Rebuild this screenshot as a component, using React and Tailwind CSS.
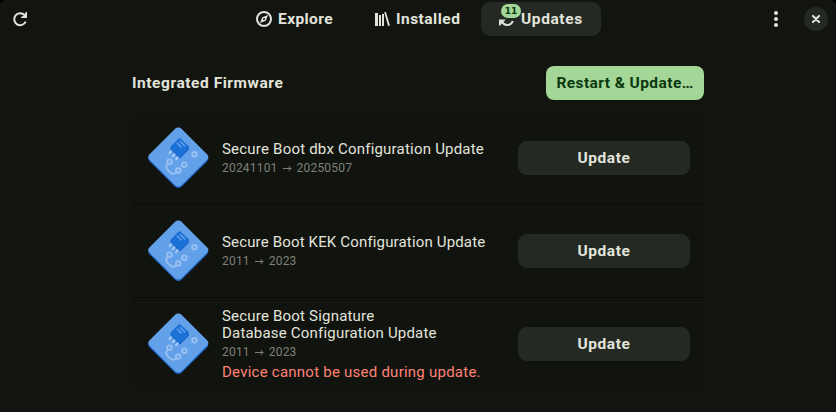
const rows = [
  { lines: ["Secure Boot dbx Configuration Update"], from: "20241101", to: "20250507", spacing: "tracking-[0.21px]" },
  { lines: ["Secure Boot KEK Configuration Update"], from: "2011", to: "2023", spacing: "tracking-[0.16px]" },
  {
    lines: ["Secure Boot Signature", "Database Configuration Update"],
    from: "2011",
    to: "2023",
    spacing: "tracking-[0.2px]",
    warning: "Device cannot be used during update.",
  },
];

function RefreshIcon() {
  return (
    <svg className="size-4" viewBox="0 0 16 16" fill="none">
      <path d="M13.7 10.6A6 6 0 1 1 12.6 4.1" stroke="currentColor" strokeWidth="2" />
      <path d="M15 1v6H9V6l2.2-1.1L14 1z" fill="currentColor" />
    </svg>
  );
}

function CompassIcon() {
  return (
    <svg className="size-4" viewBox="0 0 16 16" fill="none">
      <circle cx="8" cy="8" r="7" stroke="currentColor" strokeWidth="2" />
      <path fillRule="evenodd" d="M12 4L9.8 9.8 4 12l2.2-5.8zM8 7a1 1 0 1 0 0 2 1 1 0 0 0 0-2z" fill="currentColor" />
    </svg>
  );
}

function LibraryIcon() {
  return (
    <svg className="size-4" viewBox="0 0 16 16" fill="currentColor">
      <path d="M1 2h3v13H1zM5 4h2v11H5zM8 3h2v12H8z" />
      <path d="M10.2 1.3l1.7-.4 4 13.5-1.8.5z" />
    </svg>
  );
}

function SyncIcon() {
  return (
    <svg className="size-4" viewBox="0 0 16 16" fill="none">
      <path d="M3.2 11A5.8 5.8 0 0 0 13.8 10" stroke="currentColor" strokeWidth="2" />
      <path d="M0 14.5V8.5h6v1L4 11 1.2 14.5z" fill="currentColor" />
    </svg>
  );
}

function FirmwareIcon() {
  return (
    <svg className="mb-[3px] size-16 shrink-0" viewBox="-0.3 0 64 64" fill="none">
      <path d="M28.8 5.5a4.6 4.6 0 0 1 6.4 0L60.7 31a3.8 3.8 0 0 1 0 5.4L35.2 61.8a4.6 4.6 0 0 1-6.4 0L3.3 36.4a3.8 3.8 0 0 1 0-5.4z" fill="#1c62c4" />
      <path d="M28.8 3.8a4.6 4.6 0 0 1 6.4 0l25.5 25.5a3.8 3.8 0 0 1 0 5.4L35.2 60.2a4.6 4.6 0 0 1-6.4 0L3.3 34.7a3.8 3.8 0 0 1 0-5.4z" fill="#62a0ea" />
      <path d="M31.7 15.2q1.3-1.3 2.7-.3l7.8 7.4q1.2 1.3 0 2.6l-7.4 7.6q-1.3 1.3-2.6 0l-7.6-7.4q-1.2-1.2.1-2.6z" fill="#185fc3" />
      <path d="M31.7 14q1.3-1.3 2.7-.3l7.8 7.4q1.2 1.3 0 2.6l-7.4 7.6q-1.3 1.3-2.6 0l-7.6-7.4q-1.2-1.2.1-2.6z" fill="#1c71d8" />
      <path d="M30.6 17.8l4.6 4.6M33.7 16.2l5.2 5.2" stroke="#62a0ea" strokeWidth="1.5" />
      <path d="M23.2 28.1l1.6-1.9M26.5 31.2l1.6-1.9M29.8 34.2l1.6-1.9" stroke="#a9cdf8" strokeWidth="2" strokeLinecap="round" />
      <g stroke="#99c1f1" strokeWidth="1.9">
        <circle cx="48.2" cy="29.3" r="2.3" />
        <circle cx="23.2" cy="36.7" r="2.3" />
        <circle cx="38" cy="39.7" r="2.3" />
        <circle cx="32" cy="45.5" r="2.3" />
        <path d="M21.5 38.7c-2 2-2 4.4 0 6.4l1.8 1.8c2.2 2.2 5 2.2 7 .4" />
      </g>
    </svg>
  );
}

function CloseIcon() {
  return (
    <svg className="size-4" viewBox="0 0 16 16" fill="none">
      <path d="M5 5l6 6M11 5l-6 6" stroke="currentColor" strokeWidth="2.2" strokeLinecap="round" />
    </svg>
  );
}

function Arrow() {
  return (
    <svg className="mx-[5px] h-2 w-[9px]" viewBox="0 0 9 8" fill="none">
      <path d="M0 4.5h8M5.5 2L8 4.5 5.5 7" stroke="currentColor" />
    </svg>
  );
}

function Header() {
  return (
    <header className="flex h-[38px] items-center pl-3 pr-2">
      <button className="w-[52px]"><RefreshIcon /></button>
      <nav className="ml-[172px] flex gap-[1px] text-[15.5px] font-bold">
        <button className="flex h-[34px] w-[117px] items-center gap-[6px] pl-5">
          <CompassIcon /><span className="pt-[2px] tracking-[0.42px]">Explore</span>
        </button>
        <button className="flex h-[34px] w-[126px] items-center gap-[6px] pl-5">
          <LibraryIcon /><span className="pt-[2px] tracking-[0.48px]">Installed</span>
        </button>
        <button className="flex h-[34px] w-[120px] items-center gap-[6px] rounded-[9px] bg-[#242924] pl-[18px]">
          <span className="relative">
            <SyncIcon />
            <span className="absolute left-[2px] top-[-7px] flex h-[14px] w-5 items-center justify-center rounded-full bg-[#a4d698] font-['DejaVu_Sans',sans-serif] text-[9px] font-bold leading-none text-[#0a390f]">11</span>
          </span>
          <span className="pt-[2px] tracking-[0.6px]">Updates</span>
        </button>
      </nav>
      <div className="ml-auto flex items-center gap-5">
        <button className="flex w-4 justify-center">
          <svg className="size-4" viewBox="0 0 16 16" fill="currentColor">
            <circle cx="8" cy="2" r="2" /><circle cx="8" cy="8" r="2" /><circle cx="8" cy="14" r="2" />
          </svg>
        </button>
        <button className="flex size-6 items-center justify-center rounded-full bg-[#242924]"><CloseIcon /></button>
      </div>
    </header>
  );
}

export default function App() {
  return (
    <div className="h-[412px] w-[836px] overflow-hidden bg-black font-['Roboto',sans-serif] text-[#e2e4dc]">
      <div className="h-full rounded-t-[6px] bg-[#12150f]">
        <Header />
        <main className="mx-auto w-[572px] pt-7">
          <div className="flex h-[34px] items-center justify-between font-bold">
            <h1 className="pt-[2px] text-[15.5px] tracking-[0.55px]">Integrated Firmware</h1>
            <button className="h-[34px] w-[158px] rounded-[8px] bg-[#a4d698] pt-[2px] text-[15.5px] tracking-[0.42px] text-[#0a390f]">Restart &amp; Update…</button>
          </div>
          <section className="mt-3 divide-y divide-[#080a07] rounded-[10px] bg-[#11140e]">
            {rows.map((row) => (
              <div key={row.lines[0]} className="flex h-[93px] items-center pl-[14px] pr-[14px] last:h-[92px]">
                <FirmwareIcon />
                <div className={`ml-3 flex-1 ${row.warning ? "" : "pt-px"}`}>
                  <h2 className="text-[15px] leading-[17px]">
                    {row.lines.map((line) => <span key={line} className={`block ${row.spacing}`}>{line}</span>)}
                  </h2>
                  <p className="mt-[2px] flex items-center text-[12px] leading-4 tracking-[0.2px] text-[#7e807a]">
                    {row.from}<Arrow />{row.to}
                  </p>
                  {row.warning && <p className="mt-[4px] text-[15px] leading-[17px] tracking-[0.24px] text-[#ff8276]">{row.warning}</p>}
                </div>
                <button className="h-[34px] w-[172px] rounded-[9px] bg-[#242924] pt-[2px] text-[15.5px] font-bold tracking-[0.55px]">Update</button>
              </div>
            ))}
          </section>
        </main>
      </div>
    </div>
  );
}
